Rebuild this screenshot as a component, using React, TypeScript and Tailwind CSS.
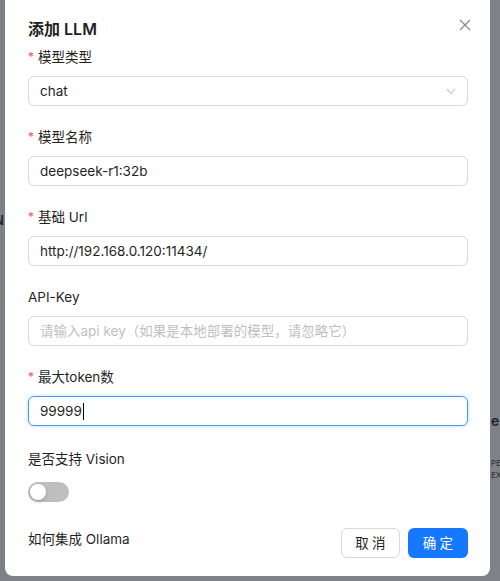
import React from 'react';

const font = { fontFamily: 'Inter, "Noto Sans CJK SC", sans-serif' };

const Label: React.FC<{ text: string; required?: boolean }> = ({ text, required }) => (
  <div className="flex items-center h-[22px] text-[13.5px] text-[#1f1f1f] mb-2">
    {required && <span className="text-[#ff4d4f] text-[12px] mr-[4px] leading-none">*</span>}
    <span>{text}</span>
  </div>
);

const Input: React.FC<{ value?: string; placeholder?: string; focused?: boolean }> = ({
  value,
  placeholder,
  focused,
}) => (
  <div
    className={
      focused
        ? 'h-[30px] rounded-[6px] border border-[#4096ff] shadow-[0_0_0_2px_rgba(5,145,255,0.1)] px-[11px] flex items-center text-[13.5px] text-[#1f1f1f]'
        : 'h-[30px] rounded-[6px] border border-[#d9d9d9] px-[11px] flex items-center text-[13.5px] text-[#1f1f1f]'
    }
  >
    {value ? (
      <span>{value}</span>
    ) : (
      <span className="text-[#bfbfbf]">{placeholder}</span>
    )}
    {focused && <span className="w-px h-[17px] bg-black ml-px" />}
  </div>
);

export default function App() {
  return (
    <div className="w-[500px] h-[581px] bg-[#7f8186] flex overflow-hidden" style={font}>
      {/* page behind the overlay, left edge */}
      <div className="w-[5px] shrink-0 overflow-hidden">
        <div className="mt-[211px] text-[13px] font-semibold text-[#1c2430] -ml-[6px]">N</div>
      </div>

      {/* modal */}
      <div className="relative w-[485px] h-[576px] shrink-0 bg-white rounded-b-[8px] pt-[17px] pl-[23px] pr-[22px]">
        <div className="h-[24px] flex items-center text-[16px] font-semibold text-[#1f1f1f]">添加 LLM</div>
        <button className="absolute left-[453px] top-[18px] w-[13px] h-[13px] flex items-center justify-center">
          <svg width="12" height="12" viewBox="0 0 12 12" fill="none" stroke="#8c8c8c" strokeWidth="1.3">
            <path d="M1 1 L11 11 M11 1 L1 11" />
          </svg>
        </button>

        <div className="mt-[5px]">
          <Label text="模型类型" required />
          <div className="h-[30px] rounded-[6px] border border-[#d9d9d9] px-[11px] flex items-center justify-between text-[13.5px] text-[#1f1f1f]">
            <span>chat</span>
            <svg width="10" height="7" viewBox="0 0 10 7" fill="none" stroke="#bfbfbf" strokeWidth="1.1">
              <path d="M1 1 L5 5.5 L9 1" />
            </svg>
          </div>
        </div>

        <div className="mt-[20px]">
          <Label text="模型名称" required />
          <Input value="deepseek-r1:32b" />
        </div>

        <div className="mt-[20px]">
          <Label text="基础 Url" required />
          <Input value="http://192.168.0.120:11434/" />
        </div>

        <div className="mt-[20px]">
          <Label text="API-Key" />
          <Input placeholder="请输入api key（如果是本地部署的模型，请忽略它）" />
        </div>

        <div className="mt-[20px]">
          <Label text="最大token数" required />
          <Input value="99999" focused />
        </div>

        <div className="mt-[22px]">
          <div className="h-[22px] flex items-center text-[13.5px] text-[#1f1f1f]">是否支持 Vision</div>
          <div className="mt-[12px] w-[41px] h-[20px] rounded-full bg-[#bfbfbf] p-[2px]">
            <div className="w-[16px] h-[16px] rounded-full bg-white shadow-[0_2px_4px_rgba(0,35,11,0.2)]" />
          </div>
        </div>

        <div className="mt-[26px] flex items-start justify-between">
          <div className="h-[22px] flex items-center text-[13.5px] text-[#1f1f1f]">如何集成 Ollama</div>
          <div className="flex gap-[8px]">
            <button className="w-[59px] h-[30px] rounded-[6px] border border-[#d9d9d9] bg-white text-[13.5px] text-[#1f1f1f] tracking-[0.25em] pl-[3px]">
              取消
            </button>
            <button className="w-[60px] h-[30px] rounded-[6px] bg-[#1677ff] text-[13.5px] text-white tracking-[0.25em] pl-[3px]">
              确定
            </button>
          </div>
        </div>
      </div>

      {/* page behind the overlay, right edge */}
      <div className="flex-1 overflow-hidden pl-[1px]">
        <div className="mt-[414px] text-[14px] font-semibold text-[#1c2430] leading-none">e</div>
        <div className="mt-[29px] text-[8px] text-[#2a2f36] leading-[12px]">PE</div>
        <div className="text-[8px] text-[#2a2f36] leading-[12px]">EX</div>
      </div>
    </div>
  );
}
